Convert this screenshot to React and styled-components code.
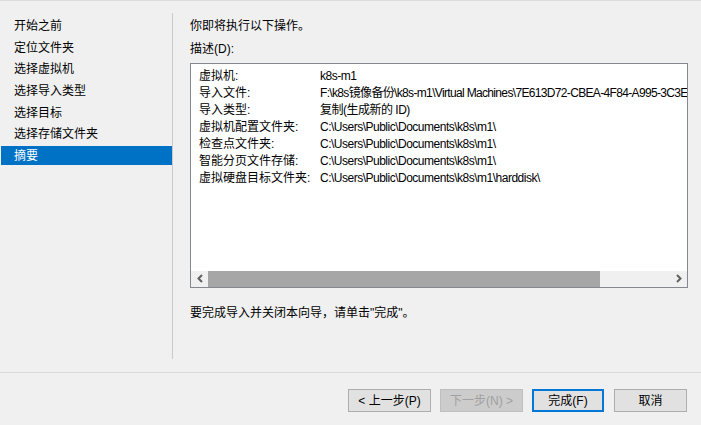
import React from 'react';
import styled, { createGlobalStyle } from 'styled-components';

const GlobalStyle = createGlobalStyle`
  html, body {
    margin: 0;
    padding: 0;
    background: #f0f0f0;
  }
  * {
    box-sizing: border-box;
  }
`;

const Window = styled.div`
  width: 701px;
  height: 425px;
  background: #f0f0f0;
  border-top: 1px solid #dcdcdc;
  display: flex;
  flex-direction: column;
  font-family: "Liberation Sans", "Noto Sans CJK SC", "Microsoft YaHei", sans-serif;
  font-size: 12px;
  color: #000;
  overflow: hidden;
`;

const Body = styled.div`
  height: 371px;
  display: flex;
  padding-top: 12px;
`;

const Sidebar = styled.nav`
  width: 173px;
  height: 346px;
  border-right: 1px solid #c9c9c9;
  padding-top: 2.5px;
  display: flex;
  flex-direction: column;
  gap: 2.7px;
`;

const NavItem = styled.div`
  height: 19px;
  line-height: 19px;
  padding-top: 1.5px;
  margin-left: 1px;
  padding-left: 13px;
  white-space: nowrap;
  background: ${(p) => (p.$active ? '#0072c6' : 'transparent')};
  color: ${(p) => (p.$active ? '#fff' : '#000')};
`;

const Content = styled.section`
  flex: 1;
  padding: 3.5px 13px 0 17px;
  display: flex;
  flex-direction: column;
`;

const Line = styled.div`
  height: 17px;
  line-height: 17px;
  padding-top: 1.5px;
  white-space: nowrap;
  margin-bottom: ${(p) => p.$gap || 0}px;
`;

const ListBox = styled.div`
  width: 498px;
  height: 225px;
  background: #fff;
  border: 1px solid #828790;
  display: flex;
  flex-direction: column;
  margin-bottom: 15px;
`;

const Rows = styled.div`
  flex: 1;
  padding-top: 2.2px;
  overflow: hidden;
`;

const Row = styled.div`
  display: flex;
  height: 17px;
  line-height: 17px;
  padding-top: 1.5px;
  white-space: nowrap;
`;

const Label = styled.span`
  width: 129px;
  flex: none;
  padding-left: 8px;
`;

const Value = styled.span`
  flex: 1;
  min-width: 0;
  overflow: hidden;
  letter-spacing: ${(p) => (p.$tight ? -0.66 : -0.5)}px;
`;

const ScrollBar = styled.div`
  height: 16px;
  margin-bottom: 0.7px;
  display: flex;
  background: #f0f0f0;
`;

const Arrow = styled.div`
  width: 17px;
  flex: none;
  display: flex;
  align-items: center;
  justify-content: center;
`;

const Track = styled.div`
  flex: 1;
  display: flex;
`;

const Thumb = styled.div`
  width: 392px;
  background: #a6a6a6;
`;

const Footer = styled.footer`
  flex: 1;
  border-top: 1px solid #dadada;
  display: flex;
  justify-content: flex-end;
  align-items: flex-start;
  padding: 16px 14px 0 0;
  gap: 9px;
`;

const Button = styled.button`
  width: ${(p) => p.$w}px;
  height: 23px;
  padding: 1px 0 0;
  font-family: inherit;
  font-size: 12px;
  line-height: 1;
  background: ${(p) => (p.disabled ? '#cccccc' : '#e1e1e1')};
  color: ${(p) => (p.disabled ? '#a0a0a0' : '#000')};
  border: ${(p) => (p.$primary ? '2px solid #0078d7' : p.disabled ? '1px solid #bfbfbf' : '1px solid #adadad')};
  margin-right: ${(p) => p.$mr || 0}px;
`;

const Chevron = ({ dir }) => (
  <svg width="8" height="9" viewBox="0 0 8 9">
    <path
      d={dir === 'left' ? 'M6 1 L2.5 4.5 L6 8' : 'M2 1 L5.5 4.5 L2 8'}
      fill="none"
      stroke="#606060"
      strokeWidth="2"
    />
  </svg>
);

const steps = ['开始之前', '定位文件夹', '选择虚拟机', '选择导入类型', '选择目标', '选择存储文件夹', '摘要'];

const details = [
  ['虚拟机:', 'k8s-m1'],
  ['导入文件:', 'F:\\k8s镜像备份\\k8s-m1\\Virtual Machines\\7E613D72-CBEA-4F84-A995-3C3E', true],
  ['导入类型:', '复制(生成新的 ID)'],
  ['虚拟机配置文件夹:', 'C:\\Users\\Public\\Documents\\k8s\\m1\\'],
  ['检查点文件夹:', 'C:\\Users\\Public\\Documents\\k8s\\m1\\'],
  ['智能分页文件存储:', 'C:\\Users\\Public\\Documents\\k8s\\m1\\'],
  ['虚拟硬盘目标文件夹:', 'C:\\Users\\Public\\Documents\\k8s\\m1\\harddisk\\'],
];

export default function App() {
  return (
    <>
      <GlobalStyle />
      <Window>
        <Body>
          <Sidebar>
            {steps.map((s, i) => (
              <NavItem key={s} $active={i === steps.length - 1}>
                {s}
              </NavItem>
            ))}
          </Sidebar>
          <Content>
            <Line $gap={6.3}>你即将执行以下操作。</Line>
            <Line $gap={6.5}>描述(D):</Line>
            <ListBox>
              <Rows>
                {details.map(([k, v, tight]) => (
                  <Row key={k}>
                    <Label>{k}</Label>
                    <Value $tight={tight}>{v}</Value>
                  </Row>
                ))}
              </Rows>
              <ScrollBar>
                <Arrow>
                  <Chevron dir="left" />
                </Arrow>
                <Track>
                  <Thumb />
                </Track>
                <Arrow>
                  <Chevron dir="right" />
                </Arrow>
              </ScrollBar>
            </ListBox>
            <Line>要完成导入并关闭本向导，请单击"完成"。</Line>
          </Content>
        </Body>
        <Footer>
          <Button $w={83}>&lt; 上一步(P)</Button>
          <Button $w={83} disabled>下一步(N) &gt;</Button>
          <Button $w={72} $primary $mr={1}>完成(F)</Button>
          <Button $w={73}>取消</Button>
        </Footer>
      </Window>
    </>
  );
}
